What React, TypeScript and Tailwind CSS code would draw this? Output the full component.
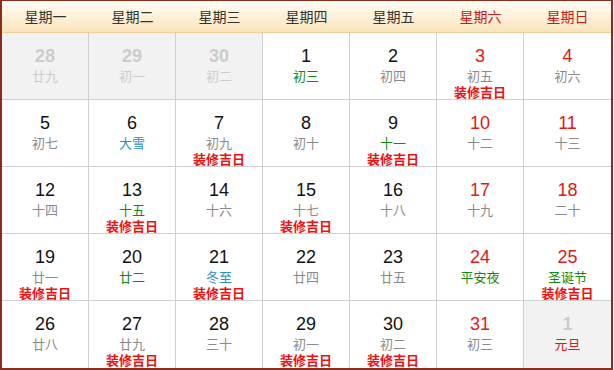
import React from "react";

type Cell = {
  d: number;
  l: string;
  lc?: "gray" | "green" | "blue" | "red";
  red?: boolean;
  other?: boolean;
  good?: boolean;
};

const rows: Cell[][] = [
  [
    { d: 28, l: "廿九", other: true },
    { d: 29, l: "初一", other: true },
    { d: 30, l: "初二", other: true },
    { d: 1, l: "初三", lc: "green" },
    { d: 2, l: "初四" },
    { d: 3, l: "初五", red: true, good: true },
    { d: 4, l: "初六", red: true },
  ],
  [
    { d: 5, l: "初七" },
    { d: 6, l: "大雪", lc: "blue" },
    { d: 7, l: "初九", good: true },
    { d: 8, l: "初十" },
    { d: 9, l: "十一", lc: "green", good: true },
    { d: 10, l: "十二", red: true },
    { d: 11, l: "十三", red: true },
  ],
  [
    { d: 12, l: "十四" },
    { d: 13, l: "十五", lc: "green", good: true },
    { d: 14, l: "十六" },
    { d: 15, l: "十七", good: true },
    { d: 16, l: "十八" },
    { d: 17, l: "十九", red: true },
    { d: 18, l: "二十", red: true },
  ],
  [
    { d: 19, l: "廿一", good: true },
    { d: 20, l: "廿二", lc: "green" },
    { d: 21, l: "冬至", lc: "blue", good: true },
    { d: 22, l: "廿四" },
    { d: 23, l: "廿五" },
    { d: 24, l: "平安夜", lc: "green", red: true },
    { d: 25, l: "圣诞节", lc: "green", red: true, good: true },
  ],
  [
    { d: 26, l: "廿八" },
    { d: 27, l: "廿九", good: true },
    { d: 28, l: "三十" },
    { d: 29, l: "初一", good: true },
    { d: 30, l: "初二", good: true },
    { d: 31, l: "初三", red: true },
    { d: 1, l: "元旦", lc: "red", other: true },
  ],
];

const heads = ["星期一", "星期二", "星期三", "星期四", "星期五", "星期六", "星期日"];

function lunarClass(c: Cell) {
  if (c.lc === "green") return "text-[#118811]";
  if (c.lc === "blue") return "text-[#2b8fbf]";
  if (c.lc === "red") return "text-[#d02020]";
  if (c.other) return "text-[#cccccc]";
  return "text-[#8a8a8a]";
}

export default function App() {
  return (
    <div className="w-[614px] h-[370px] bg-white">
      <div className="w-[613px] h-[370px] border-2 border-t border-[#8e2c1c] flex flex-col">
        <div className="grid grid-cols-7 h-[32px] shrink-0 bg-gradient-to-b from-[#fffdf6] to-[#fbe4bb] border-b border-[#f3cf95]">
          {heads.map((h, i) => (
            <div
              key={h}
              className={`flex items-center justify-center text-[14px] [font-family:'Noto_Sans_CJK_SC',sans-serif] ${
                i >= 5 ? "text-[#c81a1a]" : "text-[#333333]"
              }`}
            >
              {h}
            </div>
          ))}
        </div>
        <div className="grid grid-cols-7 grid-rows-[repeat(5,67px)]">
          {rows.flat().map((c, i) => {
            const col = i % 7;
            const row = Math.floor(i / 7);
            return (
              <div
                key={i}
                className={`flex flex-col items-center pt-[12px] border-[#cfcfcf] ${
                  col < 6 ? "border-r" : ""
                } ${row < 4 ? "border-b" : ""} ${c.other ? "bg-[#f2f2f2]" : "bg-white"}`}
              >
                <div
                  className={`text-[18px] leading-[22px] [font-family:'Liberation_Sans',Arial,sans-serif] ${
                    c.other ? "text-[#cccccc] font-bold" : c.red ? "text-[#e01818]" : "text-[#111111]"
                  }`}
                >
                  {c.d}
                </div>
                <div
                  className={`text-[13px] leading-[18px] [font-family:'Noto_Sans_CJK_SC',sans-serif] ${lunarClass(c)}`}
                >
                  {c.l}
                </div>
                {c.good && (
                  <div className="text-[13px] leading-[14px] font-bold text-[#ee1111] [font-family:'Noto_Sans_CJK_SC',sans-serif]">
                    装修吉日
                  </div>
                )}
              </div>
            );
          })}
        </div>
      </div>
    </div>
  );
}
